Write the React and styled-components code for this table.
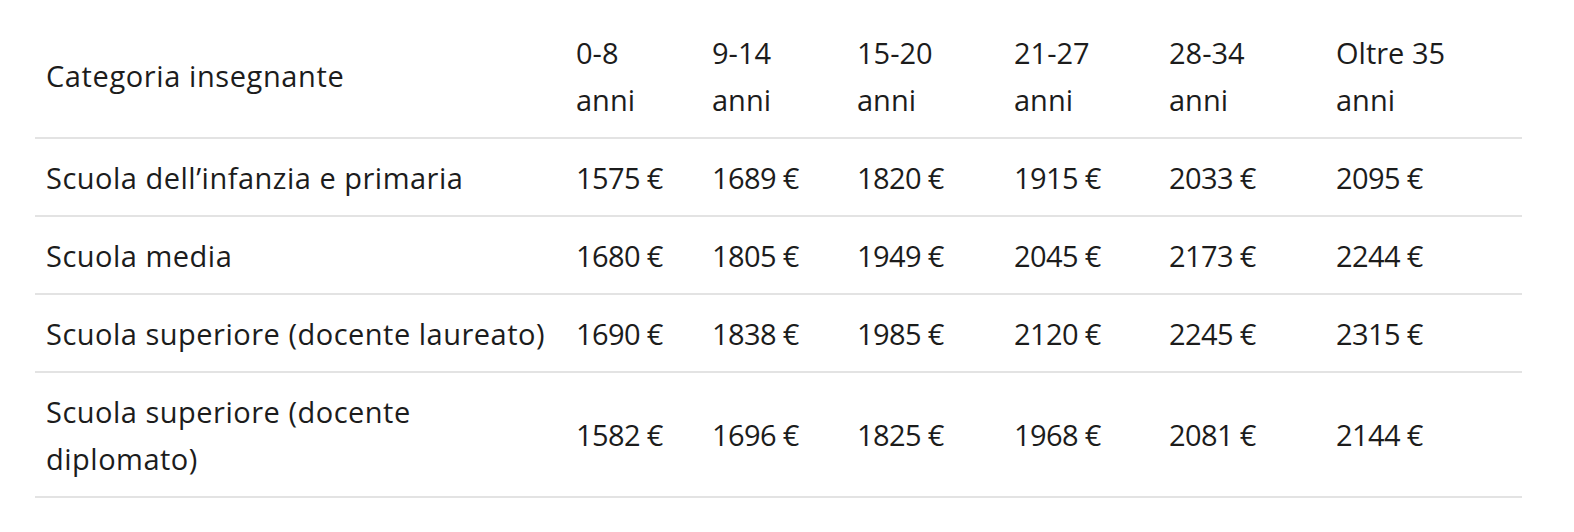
import React from 'react';
import styled, { createGlobalStyle } from 'styled-components';

const GlobalStyle = createGlobalStyle`
  body {
    margin: 0;
    background: #fff;
    font-family: "Open Sans", "Noto Sans", sans-serif;
    color: #1c1c1c;
  }
`;

const Wrapper = styled.div`
  padding: 14px 52px 0 35px;
`;

const Table = styled.table`
  width: 1487px;
  border-collapse: collapse;
  table-layout: fixed;
  font-size: 29px;
  line-height: 47px;
`;

const Row = styled.tr`
  border-bottom: 2px solid #e3e3e3;
`;

const HeadCell = styled.th`
  box-sizing: border-box;
  width: ${(p) => p.w}px;
  padding: 14.5px 8px 14.5px ${(p) => (p.first ? 11 : 13)}px;
  text-align: left;
  font-weight: 400;
  vertical-align: middle;
  letter-spacing: ${(p) => (p.first ? '0.6px' : '0')};
`;

const Cell = styled.td`
  box-sizing: border-box;
  padding: 14.5px 8px 14.5px ${(p) => (p.first ? 11 : 13)}px;
  vertical-align: middle;
  white-space: ${(p) => (p.first ? 'normal' : 'nowrap')};
  letter-spacing: ${(p) => (p.first ? '0.5px' : '-0.6px')};
`;

const columns = [
  { label: ['Categoria insegnante'], w: 528 },
  { label: ['0-8', 'anni'], w: 136 },
  { label: ['9-14', 'anni'], w: 145 },
  { label: ['15-20', 'anni'], w: 157 },
  { label: ['21-27', 'anni'], w: 155 },
  { label: ['28-34', 'anni'], w: 167 },
  { label: ['Oltre 35', 'anni'], w: 199 },
];

const rows = [
  ['Scuola dell’infanzia e primaria', 1575, 1689, 1820, 1915, 2033, 2095],
  ['Scuola media', 1680, 1805, 1949, 2045, 2173, 2244],
  ['Scuola superiore (docente laureato)', 1690, 1838, 1985, 2120, 2245, 2315],
  ['Scuola superiore (docente diplomato)', 1582, 1696, 1825, 1968, 2081, 2144],
];

export default function App() {
  return (
    <>
      <GlobalStyle />
      <Wrapper>
        <Table>
          <thead>
            <Row>
              {columns.map((c, i) => (
                <HeadCell key={i} w={c.w} first={i === 0}>
                  {c.label.map((l, j) => (
                    <React.Fragment key={j}>
                      {j > 0 && <br />}
                      {l}
                    </React.Fragment>
                  ))}
                </HeadCell>
              ))}
            </Row>
          </thead>
          <tbody>
            {rows.map((r, i) => (
              <Row key={i}>
                {r.map((v, j) => (
                  <Cell key={j} first={j === 0}>
                    {j === 0 ? v : `${v} €`}
                  </Cell>
                ))}
              </Row>
            ))}
          </tbody>
        </Table>
      </Wrapper>
    </>
  );
}
